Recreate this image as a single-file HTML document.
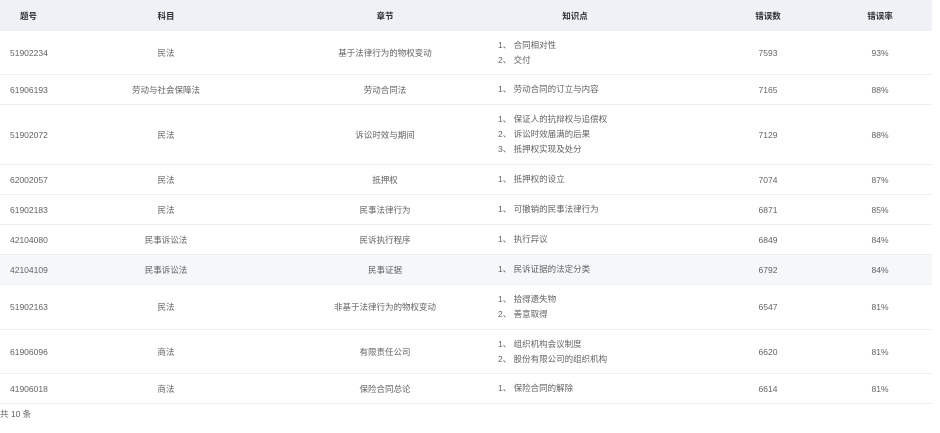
<!DOCTYPE html>
<html><head><meta charset="utf-8"><style>
*{margin:0;padding:0;box-sizing:border-box}
body{width:940px;height:433px;background:#fff;font-family:"Liberation Sans","Noto Sans CJK SC",sans-serif;font-size:8.5px;color:#606266;position:relative;overflow:hidden}
.row{position:absolute;left:0;width:932px;border-bottom:1px solid #ebeef5}
.hd{background:#eef1f6;color:#303133;font-weight:bold;border-bottom:none}
.c{position:absolute;top:0;height:100%;display:flex;align-items:center}
.ctr{justify-content:center;text-align:center}
.c1{left:10px}
.c2{left:96px;width:140px}
.c3{left:236px;width:298px}
.c4{left:498px;flex-direction:column;justify-content:center;align-items:flex-start;line-height:15px}
.c5{left:718px;width:100px}
.c6{left:830px;width:100px}
.foot{position:absolute;left:0;top:408px;font-size:8.5px}
</style></head><body>
<div class="row hd" style="top:0;height:31px">
<div class="c c1" style="left:20px">题号</div><div class="c c2 ctr">科目</div><div class="c c3 ctr">章节</div><div class="c ctr" style="left:525px;width:100px">知识点</div><div class="c c5 ctr">错误数</div><div class="c c6 ctr">错误率</div></div>

<div class="row" style="top:31px;height:44px"><div class="c c1">51902234</div><div class="c c2 ctr">民法</div><div class="c c3 ctr">基于法律行为的物权变动</div><div class="c c4"><div>1、 合同相对性</div><div>2、 交付</div></div><div class="c c5 ctr">7593</div><div class="c c6 ctr">93%</div></div>
<div class="row" style="top:75px;height:30px"><div class="c c1">61906193</div><div class="c c2 ctr">劳动与社会保障法</div><div class="c c3 ctr">劳动合同法</div><div class="c c4"><div>1、 劳动合同的订立与内容</div></div><div class="c c5 ctr">7165</div><div class="c c6 ctr">88%</div></div>
<div class="row" style="top:105px;height:60px"><div class="c c1">51902072</div><div class="c c2 ctr">民法</div><div class="c c3 ctr">诉讼时效与期间</div><div class="c c4"><div>1、 保证人的抗辩权与追偿权</div><div>2、 诉讼时效届满的后果</div><div>3、 抵押权实现及处分</div></div><div class="c c5 ctr">7129</div><div class="c c6 ctr">88%</div></div>
<div class="row" style="top:165px;height:30px"><div class="c c1">62002057</div><div class="c c2 ctr">民法</div><div class="c c3 ctr">抵押权</div><div class="c c4"><div>1、 抵押权的设立</div></div><div class="c c5 ctr">7074</div><div class="c c6 ctr">87%</div></div>
<div class="row" style="top:195px;height:30px"><div class="c c1">61902183</div><div class="c c2 ctr">民法</div><div class="c c3 ctr">民事法律行为</div><div class="c c4"><div>1、 可撤销的民事法律行为</div></div><div class="c c5 ctr">6871</div><div class="c c6 ctr">85%</div></div>
<div class="row" style="top:225px;height:30px"><div class="c c1">42104080</div><div class="c c2 ctr">民事诉讼法</div><div class="c c3 ctr">民诉执行程序</div><div class="c c4"><div>1、 执行异议</div></div><div class="c c5 ctr">6849</div><div class="c c6 ctr">84%</div></div>
<div class="row" style="top:255px;height:30px;background:#f5f7fa"><div class="c c1">42104109</div><div class="c c2 ctr">民事诉讼法</div><div class="c c3 ctr">民事证据</div><div class="c c4"><div>1、 民诉证据的法定分类</div></div><div class="c c5 ctr">6792</div><div class="c c6 ctr">84%</div></div>
<div class="row" style="top:285px;height:45px"><div class="c c1">51902163</div><div class="c c2 ctr">民法</div><div class="c c3 ctr">非基于法律行为的物权变动</div><div class="c c4"><div>1、 拾得遗失物</div><div>2、 善意取得</div></div><div class="c c5 ctr">6547</div><div class="c c6 ctr">81%</div></div>
<div class="row" style="top:330px;height:44px"><div class="c c1">61906096</div><div class="c c2 ctr">商法</div><div class="c c3 ctr">有限责任公司</div><div class="c c4"><div>1、 组织机构会议制度</div><div>2、 股份有限公司的组织机构</div></div><div class="c c5 ctr">6620</div><div class="c c6 ctr">81%</div></div>
<div class="row" style="top:374px;height:30px"><div class="c c1">41906018</div><div class="c c2 ctr">商法</div><div class="c c3 ctr">保险合同总论</div><div class="c c4"><div>1、 保险合同的解除</div></div><div class="c c5 ctr">6614</div><div class="c c6 ctr">81%</div></div>
<div class="foot">共 10 条</div>
</body></html>
